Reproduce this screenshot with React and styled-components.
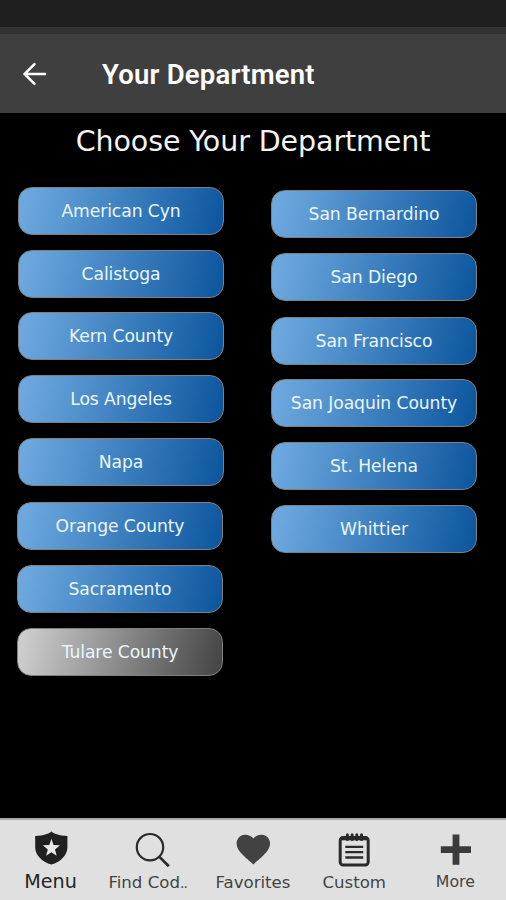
import React from 'react';
import styled, { createGlobalStyle } from 'styled-components';

const leftColumn = [
    { name: 'American Cyn' },
    { name: 'Calistoga' },
    { name: 'Kern County', space: -1 },
    { name: 'Los Angeles' },
    { name: 'Napa' },
    { name: 'Orange County', shift: true, space: 1 },
    { name: 'Sacramento', shift: true },
    { name: 'Tulare County', shift: true, gray: true },
];

const rightColumn = [
    { name: 'San Bernardino' },
    { name: 'San Diego' },
    { name: 'San Francisco', space: 1 },
    { name: 'San Joaquin County', space: -1 },
    { name: 'St. Helena' },
    { name: 'Whittier' },
];

function App() {
    return (
        <Screen>
            <GlobalStyle />
            <StatusBar />
            <Header>
                <BackButton aria-label="Back">
                    <svg width="25" height="24" viewBox="0 0 25 24" fill="none" stroke="#fff" strokeWidth="2.5" strokeLinecap="round">
                        <path d="M23 12H2.500M12.500 2.200L2.500 12L12.500 21.800" />
                    </svg>
                </BackButton>
                <HeaderTitle>Your Department</HeaderTitle>
            </Header>
            <Content>
                <Heading>Choose Your Department</Heading>
                <Columns>
                    <Column>
                        {leftColumn.map((d) => (
                            <DeptButton key={d.name} $gray={d.gray} $shift={d.shift} $space={d.space}>{d.name}</DeptButton>
                        ))}
                    </Column>
                    <Column $top={3}>
                        {rightColumn.map((d) => (
                            <DeptButton key={d.name} $space={d.space}>{d.name}</DeptButton>
                        ))}
                    </Column>
                </Columns>
            </Content>
            <TabBar>
                <Tab>
                    <TabIcon><ShieldIcon /></TabIcon>
                    <TabLabel $size={19.2} $top={3} $color="#262626">Menu</TabLabel>
                </Tab>
                <Tab>
                    <TabIcon><SearchIcon /></TabIcon>
                    <TabLabel $right={8}>Find Cod<Dots>..</Dots></TabLabel>
                </Tab>
                <Tab>
                    <TabIcon><HeartIcon /></TabIcon>
                    <TabLabel>Favorites</TabLabel>
                </Tab>
                <Tab>
                    <TabIcon><NotepadIcon /></TabIcon>
                    <TabLabel>Custom</TabLabel>
                </Tab>
                <Tab>
                    <TabIcon><PlusIcon /></TabIcon>
                    <TabLabel $size={15.8} $top={3}>More</TabLabel>
                </Tab>
            </TabBar>
        </Screen>
    );
}

export default App;

function ShieldIcon() {
    return (
        <svg width="36" height="36" viewBox="0 0 36 36">
            <path d="M18.4 .4C20.400 2.200 26 4.600 34.400 5V16.800C34.200 24.600 27.400 31 18.400 33.600C9.400 31 2.400 24.600 2.200 16.800V5C10.800 4.600 16.400 2.200 18.400 .4Z" fill="#202020" />
            <path d="M18.400 7.800L20.500 13.900L27 14.300L22 18.400L23.700 24.800L18.400 21.200L13.100 24.800L14.800 18.400L9.800 14.300L16.300 13.900Z" fill="#e8e8e8" />
        </svg>
    );
}

function SearchIcon() {
    return (
        <svg width="36" height="38" viewBox="0 0 36 38" fill="none" stroke="#2b2b2b">
            <circle cx="16" cy="16.200" r="13.200" strokeWidth="2.200" />
            <path d="M25.200 25.600L34.800 35.200" strokeWidth="2.700" />
        </svg>
    );
}

function HeartIcon() {
    return (
        <svg width="36" height="36" viewBox="0 0 36 36">
            <path d="M18.300 33.400C16.300 31.400 9.300 25.900 5.300 21.200C1.800 17.200 .8 12.900 2.200 9.300C4.700 2.700 13.800 2.100 18.300 7.600C22.800 2.100 31.900 2.700 34.400 9.300C35.800 12.900 34.800 17.200 31.300 21.200C27.300 25.900 20.300 31.400 18.300 33.400Z" fill="#424242" />
        </svg>
    );
}

function NotepadIcon() {
    return (
        <svg width="36" height="38" viewBox="0 0 36 38" fill="none" stroke="#2a2a2a">
            <rect x="4.200" y="6.500" width="28" height="27.600" rx="3" strokeWidth="3" />
            <path d="M5 7.500H31.500" strokeWidth="3.600" />
            <path d="M11.400 3.800V8.600M16.100 3.800V8.600M20.800 3.800V8.600M25.500 3.800V8.600" strokeWidth="3" strokeLinecap="round" />
            <path d="M9.300 15.800H27.200M9.300 21.100H27.200M9.300 26.500H27.200" strokeWidth="2.300" />
        </svg>
    );
}

function PlusIcon() {
    return (
        <svg width="36" height="36" viewBox="0 0 36 36">
            <path d="M15.600 3.600H22.400V15.200H34V22H22.400V33.800H15.600V22H3.800V15.200H15.600Z" fill="#3b3b3b" />
        </svg>
    );
}

const GlobalStyle = createGlobalStyle`
    * {
        box-sizing: border-box;
    }

    body {
        margin: 0;
        background-color: #000;
    }
`;

const Screen = styled.div`
    display: flex;
    flex-direction: column;
    width: 506px;
    height: 900px;
    overflow: hidden;
    background-color: #000;
    font-family: 'DejaVu Sans', Verdana, sans-serif;
`;

const StatusBar = styled.div`
    flex: none;
    height: 27px;
    background-color: #1f1f1f;
`;

const Header = styled.header`
    display: flex;
    flex: none;
    align-items: center;
    height: 86px;
    padding-left: 22px;
    border-top: 7px solid #323232;
    background-color: #3f3f3f;
`;

const BackButton = styled.button`
    display: flex;
    width: 80px;
    padding: 0;
    border: none;
    background: none;
`;

const HeaderTitle = styled.span`
    padding-top: 3px;
    font-family: Roboto, sans-serif;
    font-size: 27.5px;
    font-weight: 600;
    line-height: 32px;
    letter-spacing: 0.2px;
    color: #fff;
`;

const Content = styled.main`
    display: flex;
    flex: 1;
    flex-direction: column;
`;

const Heading = styled.h1`
    margin: 0;
    padding-top: 9px;
    height: 74px;
    font-size: 28.5px;
    font-weight: normal;
    line-height: 40px;
    letter-spacing: -0.1px;
    text-align: center;
    color: #f4f4f4;
`;

const Columns = styled.div`
    display: flex;
    gap: 47px;
    padding-left: 18px;
`;

const Column = styled.div`
    display: flex;
    flex-direction: column;
    gap: 15px;
    width: 206px;
    padding-top: ${(props) => props.$top || 0}px;
`;

const DeptButton = styled.button`
    height: 48px;
    margin-top: ${(props) => props.$space || 0}px;
    margin-left: ${(props) => (props.$shift ? '-1px' : '0')};
    width: 206px;
    padding: 0 0 1px;
    border: 1px solid #808080;
    border-radius: 14px;
    background: ${(props) => (props.$gray
        ? 'linear-gradient(103deg, #cccccc 5%, #464646 97%)'
        : 'linear-gradient(103deg, #6ca8de 5%, #0e579f 97%)')};
    background-origin: border-box;
    font-family: inherit;
    font-size: 17.2px;
    letter-spacing: -0.1px;
    color: #eaf6ff;
`;

const TabBar = styled.nav`
    display: flex;
    flex: none;
    height: 82px;
    border-top: 2px solid #a8a8a8;
    background-color: #e0e0e0;
`;

const Tab = styled.div`
    display: flex;
    flex: 1 1 0;
    flex-direction: column;
    align-items: center;
    min-width: 0;
    padding-top: 11px;
`;

const TabIcon = styled.div`
    display: flex;
    height: 36px;
`;

const TabLabel = styled.span`
    margin-top: ${(props) => props.$top || 4}px;
    padding-right: ${(props) => props.$right || 0}px;
    font-size: ${(props) => props.$size || 16.6}px;
    line-height: 24px;
    white-space: nowrap;
    color: ${(props) => props.$color || '#444'};
`;

const Dots = styled.span`
    font-size: 14px;
    letter-spacing: -0.8px;
`;
